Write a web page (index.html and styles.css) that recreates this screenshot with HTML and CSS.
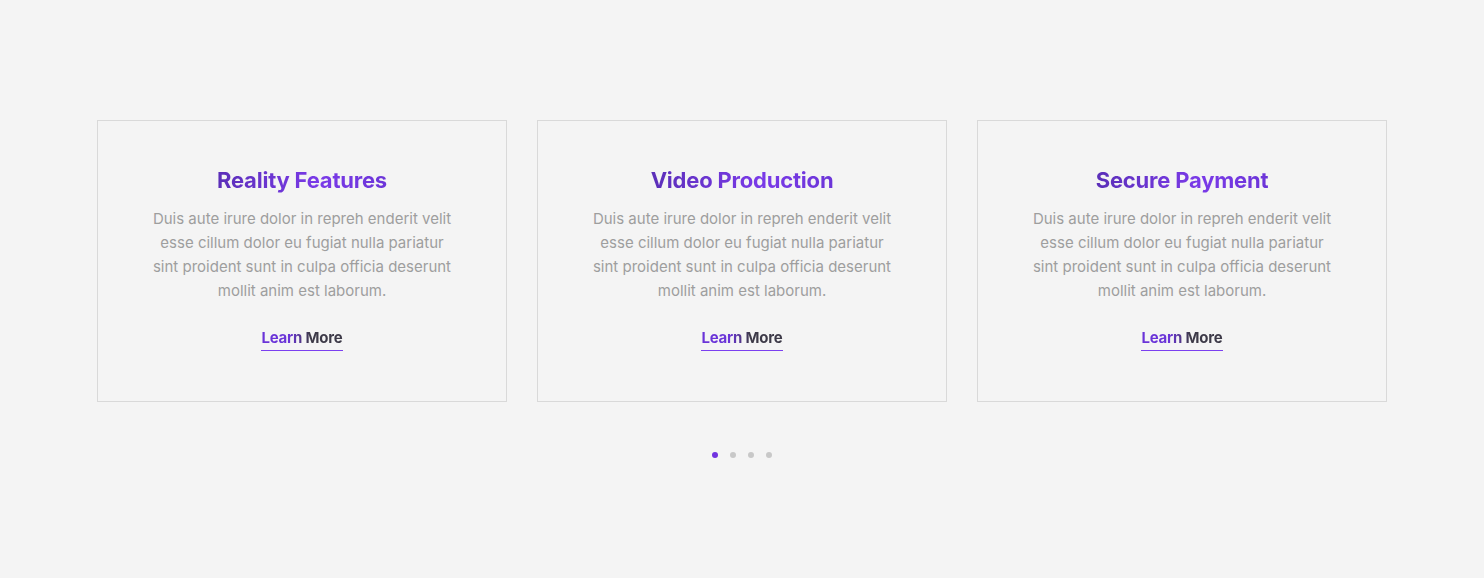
FILE: index.html
```html
<!DOCTYPE html>
<html lang="en">
<head>
<meta charset="utf-8">
<title>Features</title>
<link rel="stylesheet" href="styles.css">
</head>
<body>
<section class="features">
  <div class="cards">
    <article class="card">
      <h3 class="card-title">Reality Features</h3>
      <p class="card-text">Duis aute irure dolor in repreh enderit velit esse cillum dolor eu fugiat nulla pariatur sint proident sunt in culpa officia deserunt mollit anim est laborum.</p>
      <a class="card-link" href="#"><span class="link-text">Learn More</span></a>
    </article>
    <article class="card">
      <h3 class="card-title">Video Production</h3>
      <p class="card-text">Duis aute irure dolor in repreh enderit velit esse cillum dolor eu fugiat nulla pariatur sint proident sunt in culpa officia deserunt mollit anim est laborum.</p>
      <a class="card-link" href="#"><span class="link-text">Learn More</span></a>
    </article>
    <article class="card">
      <h3 class="card-title">Secure Payment</h3>
      <p class="card-text">Duis aute irure dolor in repreh enderit velit esse cillum dolor eu fugiat nulla pariatur sint proident sunt in culpa officia deserunt mollit anim est laborum.</p>
      <a class="card-link" href="#"><span class="link-text">Learn More</span></a>
    </article>
  </div>
  <div class="dots">
    <span class="dot active"></span>
    <span class="dot"></span>
    <span class="dot"></span>
    <span class="dot"></span>
  </div>
</section>
</body>
</html>
```

FILE: styles.css
```css
* { box-sizing: border-box; }
html, body { margin: 0; padding: 0; }
body {
  background: #f4f4f4;
  font-family: Inter, "Noto Sans", "Liberation Sans", sans-serif;
  width: 1484px;
  height: 578px;
  overflow: hidden;
}
.features {
  padding-top: 120px;
  display: flex;
  flex-direction: column;
  align-items: center;
}
.cards {
  display: flex;
  gap: 30px;
}
.card {
  width: 410px;
  height: 282px;
  border: 1px solid #d9d9d9;
  display: flex;
  flex-direction: column;
  align-items: center;
  padding-top: 44px;
  text-align: center;
}
.card-title {
  margin: 0;
  font-size: 22px;
  line-height: 30px;
  font-weight: 700;
  letter-spacing: -0.2px;
  background: linear-gradient(90deg, #5b2fb8 0%, #7a3ae8 60%, #6c35d8 100%);
  -webkit-background-clip: text;
  background-clip: text;
  color: transparent;
}
.card-text {
  margin: 12px 0 0;
  width: 302px;
  font-size: 15px;
  line-height: 24px;
  color: #9e9e9e;
  letter-spacing: 0;
}
.card-link {
  display: inline-block;
  margin-top: 24px;
  text-decoration: none;
  padding-bottom: 3px;
  line-height: 20px;
  position: relative;
}
.card-link::after {
  content: "";
  position: absolute;
  left: 0;
  right: 0;
  bottom: 0;
  height: 1px;
  background: #7b3ff0;
}
.link-text {
  font-size: 15px;
  line-height: 20px;
  font-weight: 700;
  letter-spacing: -0.2px;
  background: linear-gradient(90deg, #6a34d8 0%, #6a34d8 35%, #3d3a48 60%, #3d3a48 100%);
  -webkit-background-clip: text;
  background-clip: text;
  color: transparent;
}
.dots {
  margin-top: 50px;
  display: flex;
  gap: 12px;
}
.dot {
  width: 6px;
  height: 6px;
  border-radius: 50%;
  background: #c8c8c8;
}
.dot.active { background: #7133e0; }
```
